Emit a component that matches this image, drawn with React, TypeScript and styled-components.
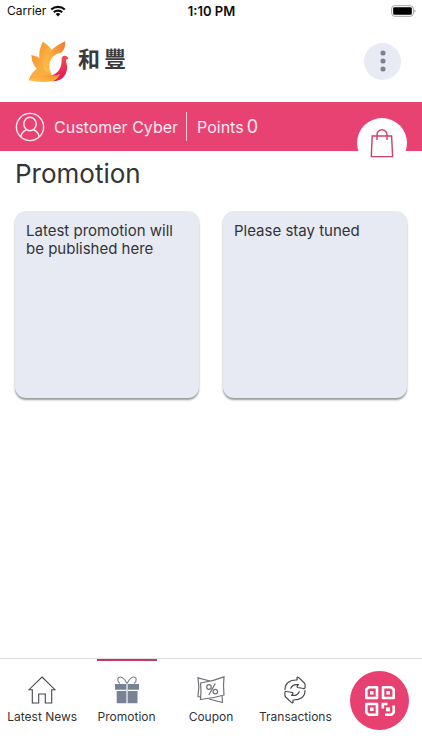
import React from "react";
import styled, { createGlobalStyle } from "styled-components";

const GlobalStyle = createGlobalStyle`
  *, *::before, *::after { box-sizing: border-box; }
  body {
    margin: 0;
    background: #fff;
    color: #333436;
    font-family: Inter, "Noto Sans", sans-serif;
  }
  button { font: inherit; color: inherit; border: 0; padding: 0; cursor: pointer; }
  svg { display: block; }
`;

const Screen = styled.div`
  display: flex;
  flex-direction: column;
  min-height: 100vh;
`;

const StatusBar = styled.div`
  display: grid;
  grid-template-columns: 1fr auto 1fr;
  align-items: center;
  height: 22px;
  padding: 0 6px 0 7px;
  font-size: 12px;
  line-height: 16px;
  color: #0c0c0c;
`;

const Carrier = styled.div`
  display: flex;
  align-items: center;
  gap: 4px;
`;

const Clock = styled.time`
  font-size: 13px;
  font-weight: 600;
`;

const Battery = styled.div`
  display: flex;
  justify-content: flex-end;
`;

const Header = styled.header`
  display: flex;
  align-items: center;
  justify-content: space-between;
  height: 80px;
  padding: 0 21px 2px 28px;
`;

const Brand = styled.a`
  display: flex;
  align-items: center;
  gap: 8px;
  color: #3a3a3a;
  text-decoration: none;
`;

const BrandName = styled.span`
  display: flex;
  gap: 4px;
  padding-bottom: 8px;
  font-family: "Noto Sans CJK TC", sans-serif;
  font-weight: 700;
  font-size: 22px;
  line-height: 28px;
`;

const MenuButton = styled.button`
  display: grid;
  place-items: center;
  width: 37px;
  height: 37px;
  border-radius: 50%;
  background: #e8ebf4;
`;

const AccountBar = styled.section`
  position: relative;
  display: flex;
  align-items: center;
  height: 49px;
  padding-left: 15px;
  background: #e84273;
  color: #fdeaf0;
  font-size: 16px;
  line-height: 24px;
`;

const Customer = styled.span`
  margin-left: 9px;
  padding-right: 8px;
`;

const Points = styled.span`
  display: flex;
  align-items: center;
  height: 29px;
  padding-left: 10px;
  border-left: 1px solid #fbd3df;
`;

const PointsValue = styled.span`
  margin-left: 3px;
  font-size: 18px;
`;

const BagButton = styled.button`
  position: absolute;
  top: 16px;
  right: 15px;
  display: grid;
  place-items: center;
  width: 50px;
  height: 50px;
  border-radius: 50%;
  background: #fff;
`;

const Main = styled.main`
  flex: 1;
  padding: 5px 15px 24px;
`;

const Title = styled.h1`
  margin: 0 0 19px;
  font-size: 26px;
  line-height: 36px;
  font-weight: 400;
`;

const Cards = styled.div`
  display: grid;
  grid-template-columns: 1fr 1fr;
  gap: 24px;
`;

const Card = styled.article`
  min-height: 187px;
  padding: 11px;
  border-radius: 11px;
  background: #e7eaf3;
  box-shadow: 0 2px 2px rgba(0, 0, 0, 0.4);
  font-size: 15px;
  line-height: 18px;
`;

const TabBar = styled.nav`
  display: grid;
  grid-template-columns: repeat(5, 1fr);
  height: 92px;
  border-top: 1px solid #dcdee3;
`;

const Tab = styled.button<{ $active?: boolean }>`
  display: flex;
  flex-direction: column;
  align-items: center;
  gap: 5px;
  background: none;
  font-size: 12px;
  line-height: 16px;
  white-space: nowrap;
  &::before {
    content: "";
    width: 60px;
    height: 2px;
    margin-bottom: 10px;
    background: ${(p) => (p.$active ? "#c9375f" : "transparent")};
  }
`;

const ScanButton = styled.button`
  display: grid;
  place-items: center;
  place-self: center;
  margin-bottom: 8px;
  width: 59px;
  height: 59px;
  border-radius: 50%;
  background: #e84070;
`;

const WifiIcon = () => (
  <svg width="16" height="12" viewBox="0 0 16 12" fill="none" stroke="#0c0c0c" strokeWidth="2.1" aria-hidden="true">
    <path d="M1.2 4.6a9.8 9.8 0 0 1 13.6 0" />
    <path d="M3.8 7.3a6 6 0 0 1 8.4 0" />
    <path d="M5.6 9.1a3.4 3.4 0 0 1 4.8 0L8 11.6Z" fill="#0c0c0c" stroke="none" />
  </svg>
);

const BatteryIcon = () => (
  <svg width="25" height="12" viewBox="0 0 25 12" aria-label="Battery full" role="img">
    <rect x=".7" y=".7" width="21.6" height="10.6" rx="3" fill="#fff" stroke="#a3a3a3" />
    <rect x="2.2" y="2.2" width="18.6" height="7.6" rx="1.4" fill="#000" />
    <path d="M23.5 4.2c1.3.6 1.3 3 0 3.6Z" fill="#8d8d8d" />
  </svg>
);

const PhoenixLogo = () => (
  <svg width="42" height="42" viewBox="12 12 126 126" aria-hidden="true">
    <defs>
      <linearGradient id="feather" x1="0" y1="1" x2="1" y2="0">
        <stop offset="0" stopColor="#ffc94a" />
        <stop offset=".5" stopColor="#fba63a" />
        <stop offset="1" stopColor="#f07a35" />
      </linearGradient>
      <linearGradient id="wing" x1="0" y1="0" x2="1" y2="1">
        <stop offset="0" stopColor="#f69335" />
        <stop offset="1" stopColor="#ffc845" />
      </linearGradient>
      <linearGradient id="breast" x1="0" y1="0" x2="0" y2="1">
        <stop offset="0" stopColor="#f0504a" />
        <stop offset="1" stopColor="#e3125f" />
      </linearGradient>
    </defs>
    <path d="M57 17Q90 38 86 58L68 96L46 68Q44 38 57 17Z" fill="url(#wing)" />
    <path d="M124 16Q124 46 108 51Q82 57 77 80Q73 97 84 116Q62 112 62 84Q70 38 124 16Z" fill="url(#feather)" />
    <path d="M22 57Q50 62 65 83Q75 98 84 120L60 116Q22 94 22 57Z" fill="url(#wing)" />
    <path d="M14 133Q24 102 46 96Q66 100 86 120L74 134Q40 130 14 133Z" fill="#fbad40" />
    <path d="M14 133Q42 114 84 119Q100 121 112 110Q110 132 86 136Q50 141 14 133Z" fill="url(#feather)" />
    <path d="M113 72Q111 61 121 59Q130 58 134 68Q125 68 126 76Q136 104 118 124Q108 135 86 136Q104 129 108 114Q96 121 82 119Q104 111 110 92Q113 82 113 72Z" fill="url(#breast)" />
    <path d="M47 68Q64 82 66 106" fill="none" stroke="#fff" strokeOpacity=".4" strokeWidth="1.5" />
  </svg>
);

const DotsIcon = () => (
  <svg width="6" height="22" viewBox="0 0 6 22" fill="#7c8190" aria-hidden="true">
    <circle cx="3" cy="3" r="2.5" />
    <circle cx="3" cy="11" r="2.5" />
    <circle cx="3" cy="19" r="2.5" />
  </svg>
);

const UserIcon = () => (
  <svg width="30" height="30" viewBox="0 0 30 30" fill="none" stroke="#fdeaf0" strokeWidth="1.4" aria-hidden="true">
    <circle cx="15" cy="15" r="13.6" />
    <ellipse cx="15" cy="12" rx="6.2" ry="6.7" />
    <path d="M5.8 25Q6.5 19.8 11.7 17.7M18.3 17.7Q23.5 19.8 24.2 25" />
  </svg>
);

const BagIcon = () => (
  <svg width="24" height="30" viewBox="0 0 24 30" fill="none" stroke="#cf4068" strokeWidth="1.4" aria-hidden="true">
    <path d="M2.2 8H21.6L22.6 28.6H1.3Z" />
    <path d="M7 12V6.7a5 5 0 0 1 10 0V12" />
  </svg>
);

const HouseIcon = () => (
  <svg width="28" height="28" viewBox="0 0 28 28" fill="none" stroke="#45474b" strokeWidth="1.1" aria-hidden="true">
    <path d="M14 1L27 13.7H23.7V27H17.3V18H10.7V27H4.3V13.7H1Z" />
  </svg>
);

const GiftIcon = () => (
  <svg width="28" height="28" viewBox="0 0 28 28" aria-hidden="true">
    <path d="M14 7.5Q10.500 1 7.500 1C4 1 4 5.500 7 7.600M14 7.500Q17.500 1 20.500 1C24 1 24 5.500 21 7.600" fill="none" stroke="#7c8697" strokeWidth="1.2" />
    <path d="M2 8H13.4V13.8H2ZM14.6 8H26V13.8H14.6ZM3.7 15H13.4V27.3H3.7ZM14.6 15H24.5V27.3H14.6Z" fill="#778294" />
    <path d="M13.4 8H14.6V27.3H13.4Z" fill="#c3c8d0" />
  </svg>
);

const CouponIcon = () => (
  <svg width="28" height="28" viewBox="0 0 28 28" fill="none" stroke="#707276" strokeWidth="1.2" aria-hidden="true">
    <path d="M13 5L1 1.8L1.8 11L1 20.500L3.500 20.900M12 23L25.500 26.500L25 19.500" />
    <path d="M3.500 7Q15.500 5.500 27 .9L26.500 10L27 19Q15.500 22.500 3.500 23.500L4 15Z" fill="#fff" />
    <path d="M18.300 7.500L11.800 19" />
    <circle cx="12" cy="11" r="2.3" />
    <circle cx="18.300" cy="15.600" r="2.3" />
  </svg>
);

const ExchangeIcon = () => (
  <svg width="28" height="28" viewBox="0 0 28 28" fill="none" stroke="#45474b" strokeWidth="1.2" strokeLinejoin="round" strokeLinecap="round" aria-hidden="true">
    <path d="M4 13.500C4 7 9 3.700 16 4V1.800Q16.300.5 17.500 1.400L23.600 7.200Q24.300 8 24.100 11.500Q23.700 13 22.400 12.500L16.800 11.500Q15.500 10.700 16.500 9.700L17.500 8.700Q11.500 7.800 9.800 12.300" />
    <path d="M24 14.500C24 21 19 24.300 12 24V26.200Q11.700 27.500 10.500 26.600L4.400 20.800Q3.700 20 3.900 16.500Q4.300 15 5.600 15.500L11.200 16.500Q12.500 17.300 11.500 18.300L10.500 19.300Q16.500 20.200 18.200 15.700" />
  </svg>
);

const QrIcon = () => (
  <svg width="32" height="32" viewBox="0 0 32 32" fill="none" stroke="#fff" strokeWidth="2.6" aria-hidden="true">
    <path d="M4.500 2.300H13V13H2.300V4.500ZM19 2.300H27.500L29.700 4.500V13H19ZM2.300 19H13V29.700H4.500L2.300 27.500Z" strokeLinejoin="round" />
    <path d="M6 6h3.6v3.6H6ZM22.4 6H26v3.6h-3.6ZM6 22.4h3.6V26H6Z" fill="#fff" stroke="none" />
    <path d="M18.800 23.500V19H23.500M21 29.700H27.500L29.700 27.500V20.500" />
    <path d="M22 22.400h4V26.400h-4Z" fill="#fff" stroke="none" />
  </svg>
);

const tabs = [
  { label: "Latest News", Icon: HouseIcon },
  { label: "Promotion", Icon: GiftIcon, active: true },
  { label: "Coupon", Icon: CouponIcon },
  { label: "Transactions", Icon: ExchangeIcon },
];

const promotions = ["Latest promotion will be published here", "Please stay tuned"];

export default function App() {
  return (
    <Screen>
      <GlobalStyle />
      <StatusBar>
        <Carrier>
          Carrier
          <WifiIcon />
        </Carrier>
        <Clock>1:10 PM</Clock>
        <Battery>
          <BatteryIcon />
        </Battery>
      </StatusBar>
      <Header>
        <Brand href="#home">
          <PhoenixLogo />
          <BrandName>
            <span>和</span>
            <span>豐</span>
          </BrandName>
        </Brand>
        <MenuButton aria-label="Menu">
          <DotsIcon />
        </MenuButton>
      </Header>
      <AccountBar>
        <UserIcon />
        <Customer>Customer Cyber</Customer>
        <Points>
          Points <PointsValue>0</PointsValue>
        </Points>
        <BagButton aria-label="Shopping bag">
          <BagIcon />
        </BagButton>
      </AccountBar>
      <Main>
        <Title>Promotion</Title>
        <Cards>
          {promotions.map((text) => (
            <Card key={text}>{text}</Card>
          ))}
        </Cards>
      </Main>
      <TabBar>
        {tabs.map(({ label, Icon, active }) => (
          <Tab key={label} $active={active} aria-current={active ? "page" : undefined}>
            <Icon />
            {label}
          </Tab>
        ))}
        <ScanButton aria-label="Scan QR code">
          <QrIcon />
        </ScanButton>
      </TabBar>
    </Screen>
  );
}
